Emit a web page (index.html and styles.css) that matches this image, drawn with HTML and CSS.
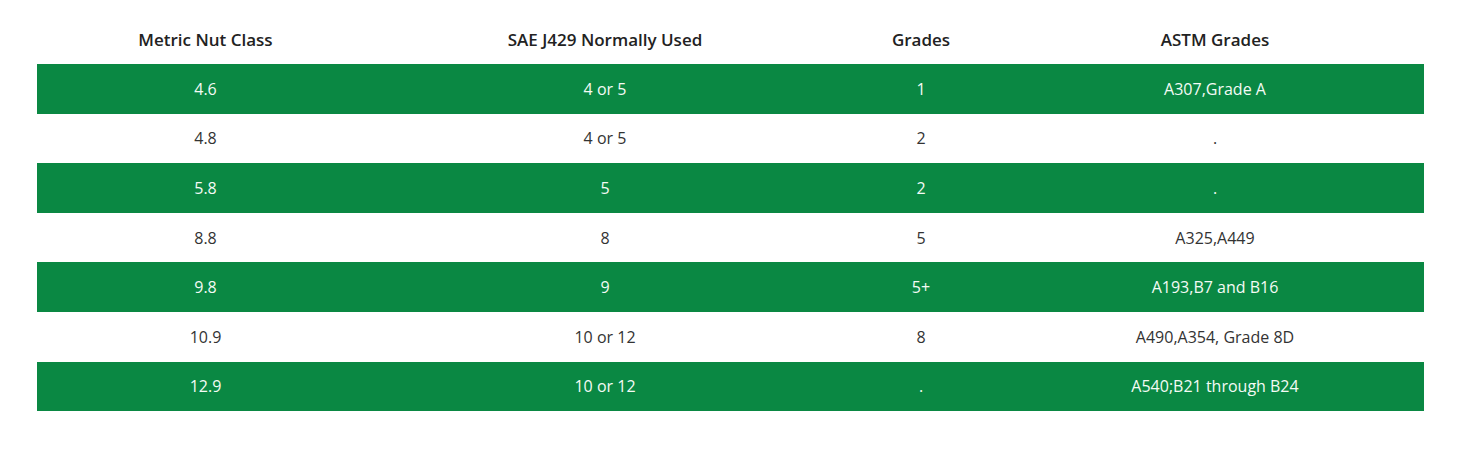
FILE: index.html
```html
<!DOCTYPE html>
<html>
<head>
<meta charset="utf-8">
<link rel="stylesheet" href="styles.css">
</head>
<body>
<div class="wrap">
<table class="grades">
  <colgroup>
    <col class="c1"><col class="c2"><col class="c3"><col class="c4">
  </colgroup>
  <thead>
    <tr><th>Metric Nut Class</th><th>SAE J429 Normally Used</th><th>Grades</th><th>ASTM Grades</th></tr>
  </thead>
  <tbody>
    <tr class="g"><td>4.6</td><td>4 or 5</td><td>1</td><td>A307,Grade A</td></tr>
    <tr><td>4.8</td><td>4 or 5</td><td>2</td><td>.</td></tr>
    <tr class="g"><td>5.8</td><td>5</td><td>2</td><td>.</td></tr>
    <tr><td>8.8</td><td>8</td><td>5</td><td>A325,A449</td></tr>
    <tr class="g"><td>9.8</td><td>9</td><td>5+</td><td>A193,B7 and B16</td></tr>
    <tr><td>10.9</td><td>10 or 12</td><td>8</td><td>A490,A354, Grade 8D</td></tr>
    <tr class="g"><td>12.9</td><td>10 or 12</td><td>.</td><td>A540;B21 through B24</td></tr>
  </tbody>
</table>
</div>
</body>
</html>
```
FILE: styles.css
```css
html, body {
  margin: 0;
  padding: 0;
  background: #fff;
}
.wrap {
  padding: 15px 38px 0 37px;
}
.grades {
  width: 1387px;
  border-collapse: collapse;
  table-layout: fixed;
  font-family: "Open Sans", "Liberation Sans", sans-serif;
  font-size: 16px;
  color: #333;
}
.c1 { width: 337px; }
.c2 { width: 462px; }
.c3 { width: 170px; }
.c4 { width: 418px; }
.grades th {
  height: 49px;
  padding: 0;
  font-size: 17px;
  font-weight: 600;
  color: #222;
  text-align: center;
  vertical-align: middle;
}
.grades td {
  height: 49.6px;
  padding: 0;
  line-height: 22px;
  text-align: center;
  vertical-align: middle;
}
.grades tr.g td {
  background: #0a8843;
  color: #f4fbf5;
}
```
